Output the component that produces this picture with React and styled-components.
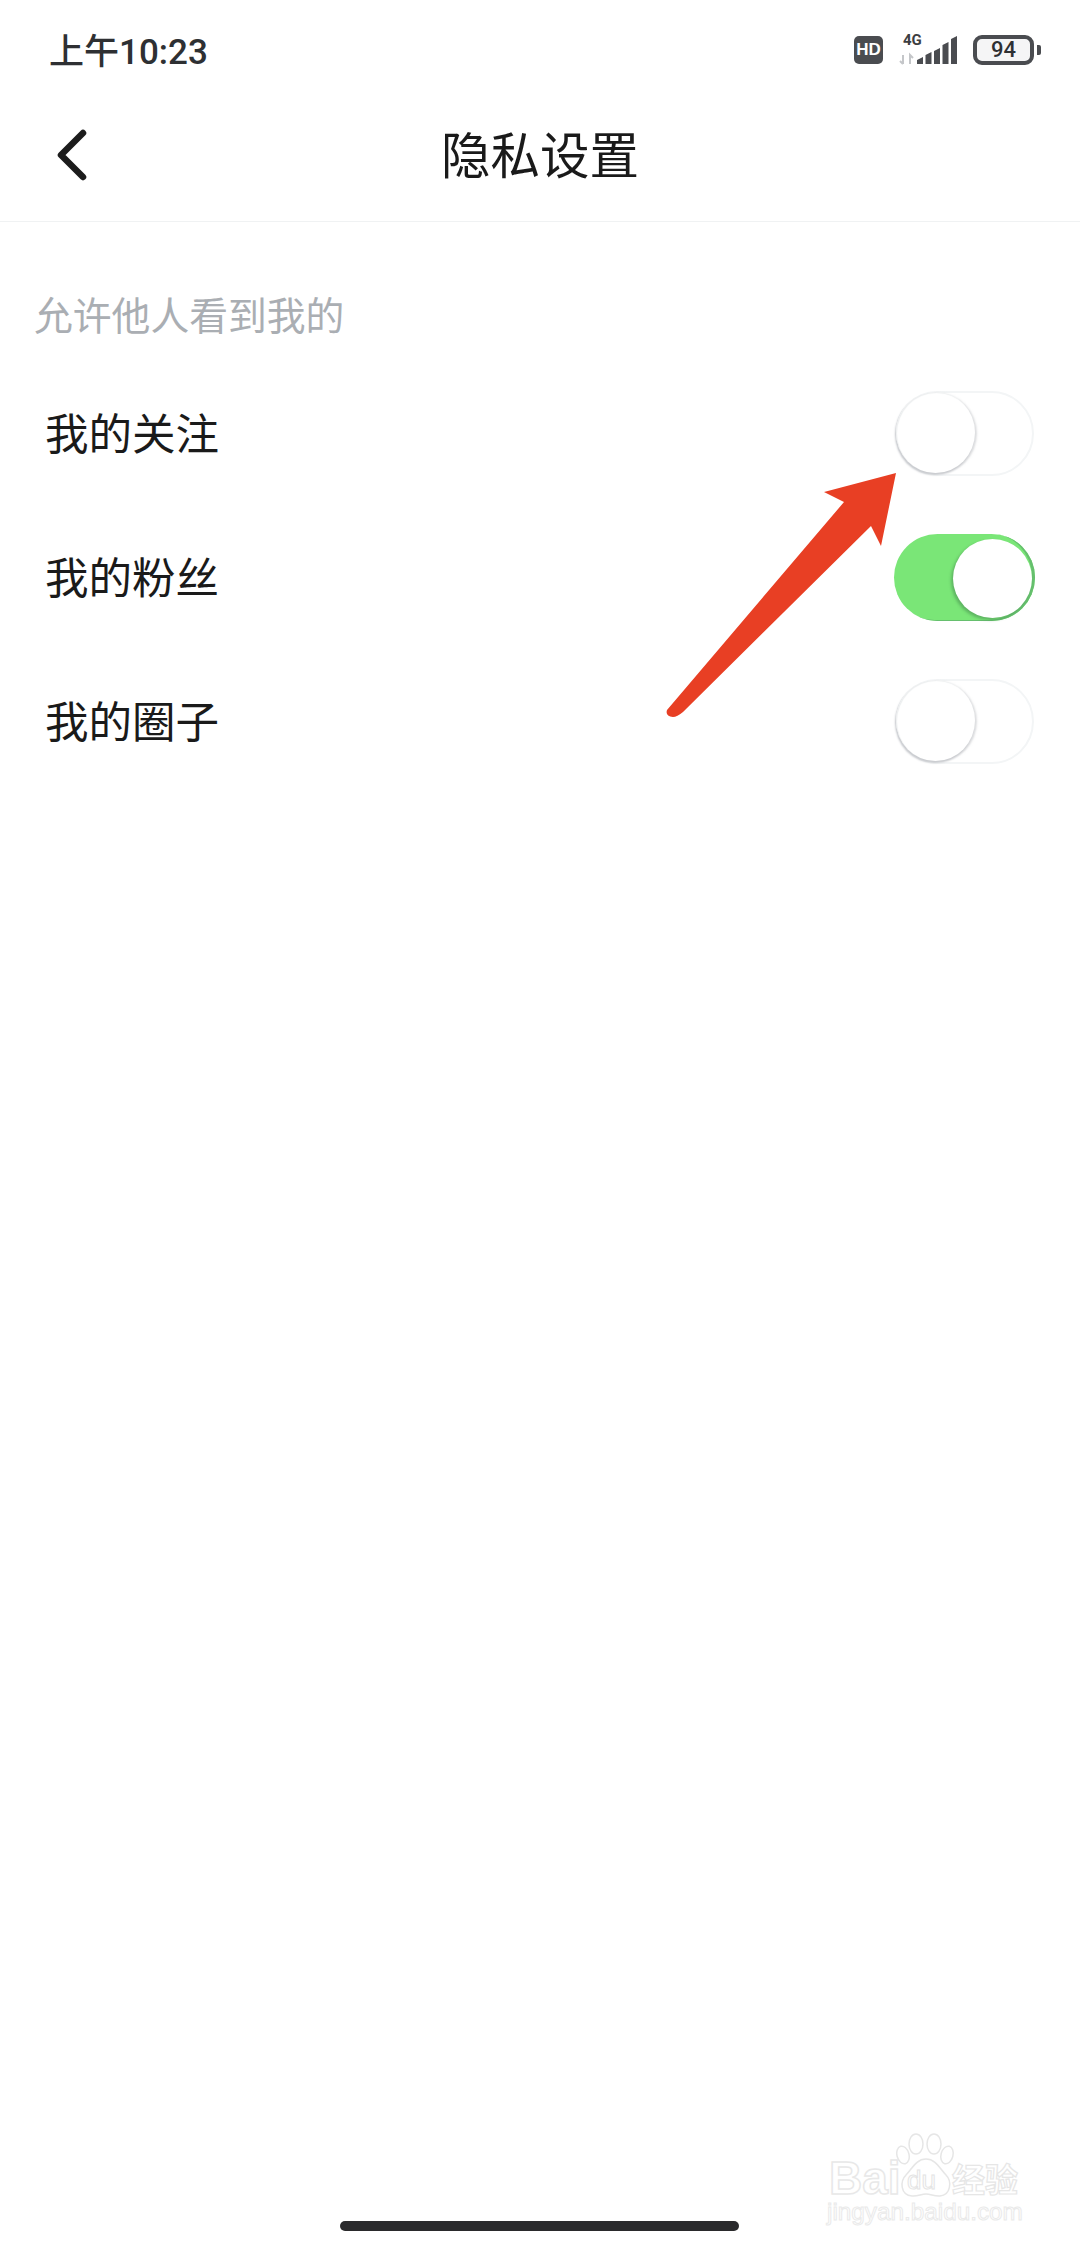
import React from 'react';
import styled, {createGlobalStyle} from 'styled-components';

const GlobalStyle = createGlobalStyle`
    html, body {
        margin: 0;
        padding: 0;
        background: #fff;
    }
    * {
        box-sizing: border-box;
    }
`;

const fontStack = `Roboto, "Noto Sans CJK SC", "Noto Sans", sans-serif`;

const Page = styled.div`
    position: relative;
    display: flex;
    flex-direction: column;
    width: 1080px;
    height: 2248px;
    overflow: hidden;
    background: #fff;
    font-family: ${fontStack};
`;
const StatusBar = styled.div`
    display: flex;
    justify-content: space-between;
    align-items: center;
    height: 100px;
    padding: 0 39px 0 49px;
`;
const Clock = styled.div`
    font-size: 35px;
    font-weight: 500;
    color: #2e3033;
    margin-bottom: 3px;
`;
const StatusIcons = styled.div`
    display: flex;
    align-items: center;
    gap: 16px;
`;
const HdBadge = styled.div`
    display: flex;
    justify-content: center;
    align-items: center;
    width: 29px;
    height: 28px;
    border-radius: 5px;
    background: #4a4c50;
    color: #fff;
    font-family: "Liberation Sans", sans-serif;
    font-size: 17px;
    font-weight: 700;
`;
const Battery = styled.div`
    display: flex;
    justify-content: center;
    align-items: center;
    width: 61px;
    height: 30px;
    border: 4px solid #4a4c50;
    border-radius: 9px;
    background: #f5f5f6;
    color: #2e3033;
    font-size: 22px;
    font-weight: 500;
    line-height: 1;
`;
const BatteryGroup = styled.div`
    display: flex;
    align-items: center;
    gap: 3px;
`;
const BatteryNub = styled.div`
    width: 4px;
    height: 10px;
    border-radius: 0 2px 2px 0;
    background: #4a4c50;
`;
const NavBar = styled.div`
    display: flex;
    align-items: center;
    justify-content: center;
    position: relative;
    height: 122px;
    border-bottom: 1px solid #f0f2f3;
`;
const BackButton = styled.div`
    position: absolute;
    left: 56px;
    top: 28px;
    width: 34px;
    height: 56px;
`;
const Title = styled.div`
    font-size: 49.5px;
    color: #1a1a1a;
    margin-top: -16px;
`;
const SectionLabel = styled.div`
    padding: 69px 0 0 34px;
    height: 140px;
    font-size: 38.8px;
    line-height: 52px;
    color: #aaaeb3;
`;
const Row = styled.div`
    display: flex;
    justify-content: space-between;
    align-items: center;
    height: 144px;
    padding: 0 ${props => props.on ? '45px' : '46px'} 0 45px;
    margin-top: ${props => props.first ? '-1px' : '0'};
`;
const RowLabel = styled.div`
    font-size: 43.5px;
    color: #1a1a1a;
    margin-bottom: 4px;
`;
const Track = styled.div`
    position: relative;
    width: ${props => props.on ? '141px' : '139px'};
    height: ${props => props.on ? '87px' : '85px'};
    border-radius: 44px;
    background: ${props => props.on ? '#7ae677' : '#fff'};
    border: ${props => props.on ? 'none' : '2px solid #f3f5f6'};
    box-shadow: ${props => props.on ? 'inset -3px -1px 0 #66bf6e' : 'none'};
`;
const Knob = styled.div`
    position: absolute;
    top: ${props => props.on ? '5px' : '-1px'};
    left: ${props => props.on ? '59px' : '-1px'};
    width: 79px;
    height: ${props => props.on ? '79px' : '81px'};
    border-radius: 50%;
    background: #fff;
    box-shadow: ${props => props.on
        ? '-2px 2px 3px rgba(60, 120, 70, 0.45)'
        : 'inset 1px 1px 1px #eceeef, -1px 2px 2px #c9cbcf, 2px 1px 2px rgba(190, 192, 196, 0.5)'};
`;
const ArrowMark = styled.svg`
    position: absolute;
    left: 660px;
    top: 465px;
`;
const Watermark = styled.div`
    position: absolute;
    left: 826px;
    top: 2130px;
    width: 200px;
    height: 105px;
`;
const WatermarkPaw = styled.svg`
    position: absolute;
    left: 70px;
    top: ${props => props.body ? '25px' : '3px'};
`;
const WatermarkBrand = styled.div`
    position: absolute;
    left: 3px;
    top: 25px;
    font-family: "Liberation Sans", sans-serif;
    font-size: 46px;
    font-weight: 700;
    line-height: 46px;
    color: #fff;
    -webkit-text-stroke: 1.5px #e8e8e8;
`;
const WatermarkDu = styled.div`
    position: absolute;
    left: 81px;
    top: 35px;
    font-family: "Liberation Sans", sans-serif;
    font-size: 26px;
    color: #fff;
    -webkit-text-stroke: 1px #e4e4e4;
`;
const WatermarkCn = styled.div`
    position: absolute;
    left: 126px;
    top: 26px;
    font-family: "Noto Sans CJK SC", sans-serif;
    font-size: 33px;
    font-weight: 700;
    line-height: 44px;
    white-space: nowrap;
    color: #fff;
    -webkit-text-stroke: 1.2px #e6e6e6;
`;
const WatermarkUrl = styled.div`
    position: absolute;
    left: 1px;
    top: 72px;
    font-family: "Liberation Sans", sans-serif;
    font-size: 24.300px;
    line-height: 20px;
    white-space: nowrap;
    color: #fff;
    -webkit-text-stroke: 1px #eaeaea;
`;
const HomeIndicator = styled.div`
    width: 399px;
    height: 10px;
    margin: auto auto 17px 340px;
    border-radius: 5px;
    background: #2a2a2c;
`;

function SignalIcon() {
    return (
        <svg width="58" height="40" viewBox="0 -4 58 40">
            <text x="4" y="11" fontFamily="Roboto, sans-serif" fontSize="15" fontWeight="700" fill="#3c3e42">4G</text>
            <path d="M4 21v9M1 27l3 3M11 30v-9l3 3" stroke="#c4c6c9" strokeWidth="2" fill="none" />
            <path d="M18 30v-4l6-3v7zM26.500 30V21l6-3v12zM35 30V17l6-3v16zM43.500 30V11l6-3v22zM52 30V5l6-3v28z" fill="#4a4c50" />
        </svg>
    );
}

function Toggle({on}) {
    return (
        <Track on={on}>
            <Knob on={on} />
        </Track>
    );
}

const rows = [
    {label: '我的关注', on: false},
    {label: '我的粉丝', on: true},
    {label: '我的圈子', on: false},
];

function App() {
    return (
        <Page>
            <GlobalStyle />
            <StatusBar>
                <Clock>上午10:23</Clock>
                <StatusIcons>
                    <HdBadge>HD</HdBadge>
                    <SignalIcon />
                    <BatteryGroup>
                        <Battery>94</Battery>
                        <BatteryNub />
                    </BatteryGroup>
                </StatusIcons>
            </StatusBar>
            <NavBar>
                <BackButton>
                    <svg width="34" height="56" viewBox="0 0 34 56">
                        <path d="M27 5 5 27l22 22" stroke="#1c1c1c" strokeWidth="6.500" strokeLinecap="round" strokeLinejoin="round" fill="none" />
                    </svg>
                </BackButton>
                <Title>隐私设置</Title>
            </NavBar>
            <SectionLabel>允许他人看到我的</SectionLabel>
            {rows.map((row, i) => (
                <Row key={row.label} first={i === 0} on={row.on}>
                    <RowLabel>{row.label}</RowLabel>
                    <Toggle on={row.on} />
                </Row>
            ))}
            <HomeIndicator />

            <ArrowMark width="240" height="260" viewBox="660 465 240 260">
                <path
                    d="M896 473 L881 546 L871 526 L683 712 Q677 717 673 717 Q665 716 667 710 L844 502 L824 492 Z"
                    fill="#e83f24"
                />
            </ArrowMark>

            <Watermark>
                <WatermarkPaw width="60" height="34" viewBox="0 0 60 34">
                    <g fill="#fff" stroke="#e6e6e6" strokeWidth="1.500">
                        <ellipse cx="7" cy="22" rx="6" ry="9" transform="rotate(-15 7 22)" />
                        <ellipse cx="20" cy="11" rx="7" ry="10" />
                        <ellipse cx="38" cy="11" rx="7" ry="10" />
                        <ellipse cx="51" cy="22" rx="6" ry="9" transform="rotate(15 51 22)" />
                    </g>
                </WatermarkPaw>
                <WatermarkBrand>Bai</WatermarkBrand>
                <WatermarkPaw body width="60" height="46" viewBox="0 0 60 46">
                    <path d="M30 4C20 4 16 14 10 20 4 26 4 40 16 41c6 .5 9-2 14-2s8 2.500 14 2c11-1 12-15 6-21C44 14 40 4 30 4z" fill="#fff" stroke="#e6e6e6" strokeWidth="1.500" />
                </WatermarkPaw>
                <WatermarkDu>du</WatermarkDu>
                <WatermarkCn>经验</WatermarkCn>
                <WatermarkUrl>jingyan.baidu.com</WatermarkUrl>
            </Watermark>
        </Page>
    );
}

export default App;
